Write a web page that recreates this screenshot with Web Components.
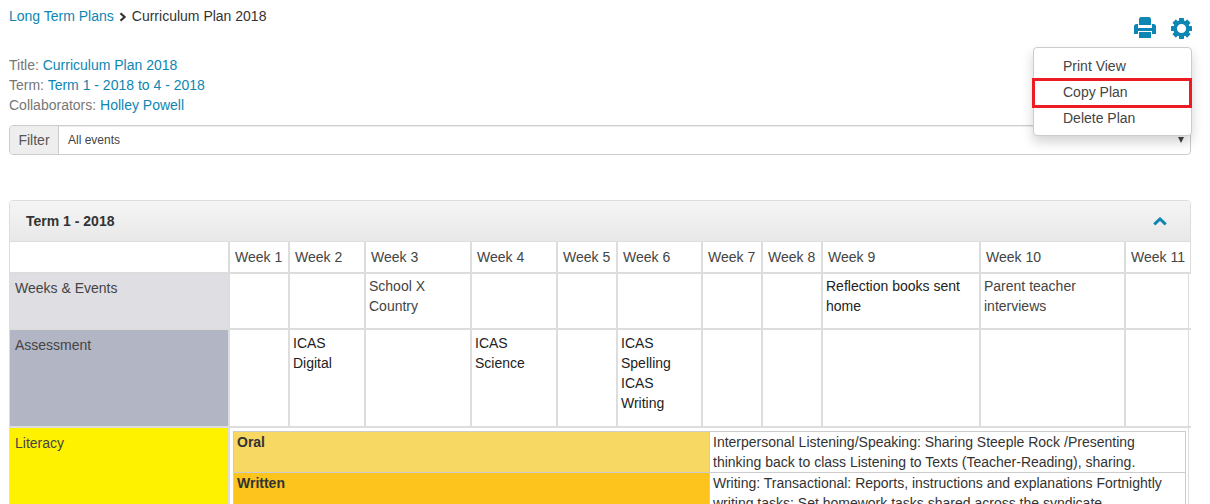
<!DOCTYPE html>
<html>
<head>
<meta charset="utf-8">
<style>
  html, body { margin: 0; height: 504px; overflow: hidden; background: #fff; }
  body { font-family: "Liberation Sans", Arial, sans-serif; font-size: 14px; color: #333; }
</style>
</head>
<body>
<plan-page></plan-page>

<script>
const LINK = "#0d86b3";

customElements.define(
  "plan-crumbs",
  class PlanCrumbs extends HTMLElement {
    constructor() {
      super();
      this.attachShadow({ mode: "open" }).innerHTML = `
        <style>
          :host { display: flex; align-items: center; height: 20px; line-height: 20px; color: #333; }
          a { color: ${LINK}; text-decoration: none; }
          svg { margin: 2px 5px 0 5px; }
        </style>
        <a href="#">Long Term Plans</a>
        <svg width="8" height="10" viewBox="0 0 8 10"><path d="M1.5 1.2 5.6 5 1.5 8.8" fill="none" stroke="#333" stroke-width="2.2"/></svg>
        <span>Curriculum Plan 2018</span>
      `;
    }
  }
);

customElements.define(
  "plan-tools",
  class PlanTools extends HTMLElement {
    constructor() {
      super();
      const teeth = [0, 45, 90, 135, 180, 225, 270, 315]
        .map((a) => `<rect x="8" y="0" width="5" height="5.5" rx="0.6" transform="rotate(${a} 10.5 10.5)"/>`)
        .join("");
      this.attachShadow({ mode: "open" }).innerHTML = `
        <style>
          :host { display: flex; gap: 15px; align-items: flex-start; }
          svg { display: block; fill: ${LINK}; }
          .gear { margin-top: 1px; }
        </style>
        <svg width="22" height="21" viewBox="0 0 22 21">
          <path d="M6.5 0h9L17 1.5V8H5V1.5z"/>
          <path d="M2.5 7H4v4h14V7h1.5A2.5 2.5 0 0 1 22 9.5V17h-4v-3H4v3H0V9.5A2.5 2.5 0 0 1 2.5 7z"/>
          <path d="M5 15h12v6H5z"/>
        </svg>
        <svg class="gear" width="21" height="21" viewBox="0 0 21 21">
          ${teeth}
          <circle cx="10.5" cy="10.5" r="6.4" fill="none" stroke="${LINK}" stroke-width="3.6"/>
        </svg>
      `;
    }
  }
);

customElements.define(
  "plan-meta",
  class PlanMeta extends HTMLElement {
    constructor() {
      super();
      this.attachShadow({ mode: "open" }).innerHTML = `
        <style>
          :host { display: block; line-height: 20px; color: #777; }
          a { color: ${LINK}; text-decoration: none; }
        </style>
        <div>Title: <a href="#">Curriculum Plan 2018</a></div>
        <div>Term: <a href="#">Term 1 - 2018 to 4 - 2018</a></div>
        <div>Collaborators: <a href="#">Holley Powell</a></div>
      `;
    }
  }
);

customElements.define(
  "plan-filter",
  class PlanFilter extends HTMLElement {
    constructor() {
      super();
      this.attachShadow({ mode: "open" }).innerHTML = `
        <style>
          :host {
            display: flex; height: 30px; box-sizing: border-box;
            border: 1px solid #ccc; border-radius: 4px;
            box-shadow: inset 0 1px 1px rgba(0,0,0,.075);
          }
          .label {
            width: 48px; background: #eee; color: #555; border-right: 1px solid #ccc;
            display: flex; align-items: center; justify-content: center;
            border-radius: 3px 0 0 3px;
          }
          .value {
            flex: 1; display: flex; align-items: center; justify-content: space-between;
            padding: 0 6px 0 9px; font-size: 12px; color: #444;
          }
          .arrow { width: 0; height: 0; border: 3.5px solid transparent; border-top: 6px solid #444; border-bottom: 0; margin-top: -1px; }
        </style>
        <div class="label">Filter</div>
        <div class="value"><span>All events</span><i class="arrow"></i></div>
      `;
    }
  }
);

customElements.define(
  "plan-menu",
  class PlanMenu extends HTMLElement {
    constructor() {
      super();
      this.attachShadow({ mode: "open" }).innerHTML = `
        <style>
          :host {
            display: block; position: absolute; left: 1033px; top: 47px; width: 159px; box-sizing: border-box;
            padding: 5px 0 4px; background: #fff; border: 1px solid #ccc; border-radius: 4px;
            box-shadow: 0 6px 12px rgba(0,0,0,.175); color: #444;
          }
          div { height: 26px; line-height: 26px; padding-left: 29px; }
          .mark { position: absolute; left: -2px; right: -1px; top: 30px; height: 30px; box-sizing: border-box; border: 3px solid #ed1c24; padding: 0; }
        </style>
        <div>Print View</div>
        <div>Copy Plan</div>
        <div>Delete Plan</div>
        <div class="mark"></div>
      `;
    }
  }
);

customElements.define(
  "plan-strand",
  class PlanStrand extends HTMLElement {
    constructor() {
      super();
      const rows = [
        ["Oral", "#f6d862", "Interpersonal Listening/Speaking: Sharing Steeple Rock /Presenting thinking back to class Listening to Texts (Teacher-Reading), sharing."],
        ["Written", "#fcc41c", "Writing: Transactional: Reports, instructions and explanations Fortnightly writing tasks: Set homework tasks shared across the syndicate."],
      ]
        .map(
          ([name, colour, text]) => `
            <tr>
              <th style="background:${colour}">${name}</th>
              <td>${text}</td>
            </tr>`
        )
        .join("");
      this.attachShadow({ mode: "open" }).innerHTML = `
        <style>
          :host { display: block; }
          table { width: 100%; table-layout: fixed; border-collapse: collapse; border: 1px solid #ccc; }
          th { width: 469px; text-align: left; vertical-align: top; padding: 0 3px; height: 40px; line-height: 20px; color: #333; border: 1px solid #ccc; }
          td { padding: 0 3px; line-height: 20px; color: #333; border: 1px solid #ccc; vertical-align: top; }
        </style>
        <table>${rows}</table>
      `;
    }
  }
);

customElements.define(
  "plan-term",
  class PlanTerm extends HTMLElement {
    constructor() {
      super();
      const weeks = [60, 76, 106, 86, 60, 85, 60, 60, 158, 145, 66];
      const cols = weeks.map((w) => `<col style="width:${w}px">`).join("");
      const head = weeks.map((w, i) => `<th>Week ${i + 1}</th>`).join("");
      const cell = (text, dark) => `<td class="${dark ? "dark" : ""}">${text || ""}</td>`;
      const events = { 2: "School X Country", 8: "Reflection books sent home", 9: "Parent teacher interviews" };
      const assessment = { 1: "ICAS Digital", 3: "ICAS Science", 5: "ICAS Spelling ICAS Writing" };
      this.attachShadow({ mode: "open" }).innerHTML = `
        <style>
          :host {
            display: block; border: 1px solid #ddd; border-radius: 4px 4px 0 0; color: #333;
          }
          header {
            height: 40px; display: flex; align-items: center; justify-content: space-between;
            padding: 0 23px 0 16px; font-weight: bold; color: #333;
            background: linear-gradient(#f5f5f5, #e8e8e8); border-bottom: 1px solid #ddd;
            border-radius: 3px 3px 0 0;
          }
          svg { display: block; }
          table { border-collapse: collapse; table-layout: fixed; width: 1181px; }
          th, td { border: 2px solid #ddd; padding: 0 3px; vertical-align: top; line-height: 20px; font-weight: normal; color: #444; text-align: left; }
          tr > :first-child { border-left: 0; }
          tr > :last-child { border-right: 0; }
          tr:first-child > * { border-top: 0; }
          .head th { height: 30px; padding: 0 5px; vertical-align: middle; white-space: nowrap; color: #444; }
          td.dark { color: #222; }
          .events { height: 56px; }
          .assess { height: 98px; }
          .events td { padding-top: 2px; }
          .assess td { padding-top: 3px; }
          tr:not(.head) > td:last-child { box-shadow: inset -2px 0 0 #fff, inset -3px 0 0 #ddd; }
          td.nest { padding: 3px 5px 3px 3px; }
          tr > td.label { padding: 5px; border-left: 0; }
          tr.events > td.label { padding-top: 4px; }
        </style>
        <header>
          <span>Term 1 - 2018</span>
          <svg width="14" height="9" viewBox="0 0 14 9"><path d="M1.3 7.3 7 2l5.7 5.3" fill="none" stroke="${LINK}" stroke-width="3"/></svg>
        </header>
        <table>
          <colgroup><col style="width:219px">${cols}</colgroup>
          <tr class="head"><th></th>${head}</tr>
          <tr class="events">
            <td class="label" style="background:#dedee3">Weeks &amp; Events</td>
            ${weeks.map((w, i) => cell(events[i], i === 8)).join("")}
          </tr>
          <tr class="assess">
            <td class="label" style="background:#b2b5c3">Assessment</td>
            ${weeks.map((w, i) => cell(assessment[i], true)).join("")}
          </tr>
          <tr class="lit">
            <td class="label" style="background:#fff200">Literacy</td>
            <td class="nest" colspan="11"><plan-strand></plan-strand></td>
          </tr>
        </table>
      `;
    }
  }
);

customElements.define(
  "plan-page",
  class PlanPage extends HTMLElement {
    constructor() {
      super();
      this.attachShadow({ mode: "open" }).innerHTML = `
        <style>
          :host { display: block; position: relative; width: 1210px; height: 504px; box-sizing: border-box; padding: 6px 19px 0 9px; }
          .top { display: flex; justify-content: space-between; height: 49px; }
          plan-tools { margin: 11px -1px 0 0; }
          plan-filter { margin-top: 10px; }
          plan-term { margin-top: 45px; }
        </style>
        <div class="top"><plan-crumbs></plan-crumbs><plan-tools></plan-tools></div>
        <plan-meta></plan-meta>
        <plan-filter></plan-filter>
        <plan-term></plan-term>
        <plan-menu></plan-menu>
      `;
    }
  }
);
</script>
</body>
</html>
